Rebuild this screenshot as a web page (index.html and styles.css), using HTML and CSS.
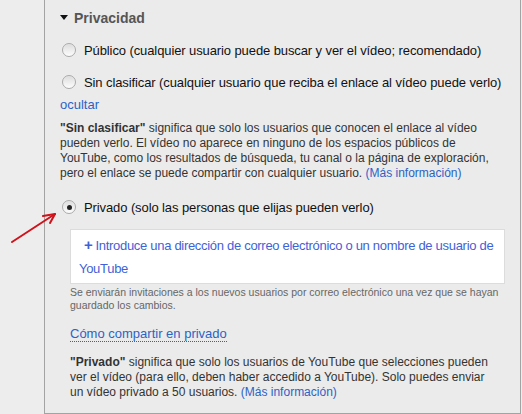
FILE: index.html
```html
<!DOCTYPE html>
<html>
    <head>
        <title>Privacidad</title>
        <meta charset="utf-8">
        <link rel="stylesheet" href="styles.css">
    </head>
    <body>
        <div class="panel">
            <h3 class="sec_title"><span class="caret"></span>Privacidad</h3>

            <label class="opt"><span class="radio"></span>Público (cualquier usuario puede buscar y ver el vídeo; recomendado)</label>
            <label class="opt"><span class="radio"></span>Sin clasificar (cualquier usuario que reciba el enlace al vídeo puede verlo)</label>
            <a class="toggle" href="#">ocultar</a>

            <p class="note"><b>"Sin clasificar"</b> significa que solo los usuarios que conocen el enlace al vídeo pueden verlo. El vídeo no aparece en ninguno de los espacios públicos de YouTube, como los resultados de búsqueda, tu canal o la página de exploración, pero el enlace se puede compartir con cualquier usuario. <a href="#">(Más información)</a></p>

            <label class="opt opt_priv"><span class="radio on"></span>Privado (solo las personas que elijas pueden verlo)</label>

            <div class="share">
                <div class="invite_box">
                    <a href="#"><span class="plus">+</span>Introduce una dirección de correo electrónico o un nombre de usuario de YouTube</a>
                </div>
                <p class="small">Se enviarán invitaciones a los nuevos usuarios por correo electrónico una vez que se hayan guardado los cambios.</p>
                <a class="howto" href="#">Cómo compartir en privado</a>
                <p class="note note_priv"><b>"Privado"</b> significa que solo los usuarios de YouTube que selecciones pueden ver el vídeo (para ello, deben haber accedido a YouTube). Solo puedes enviar un vídeo privado a 50 usuarios. <a href="#">(Más información)</a></p>
            </div>
        </div>

        <!-- red pointer drawn over the panel edge -->
        <svg class="pointer" width="70" height="40" viewBox="0 0 70 40">
            <line x1="12" y1="32" x2="55" y2="4" stroke="#d0121b" stroke-width="2" stroke-linecap="round"/>
            <polyline points="43,6 55,4 50,13" fill="none" stroke="#d0121b" stroke-width="2" stroke-linecap="round" stroke-linejoin="round"/>
        </svg>
    </body>
</html>
```

FILE: styles.css
```css
body {
    margin: 0;
    background-color: #ededed;
    font-family: "Liberation Sans", Arial, sans-serif;
    font-size: 13px;
    color: #333;
}
a {
    color: #2b63c6;
    text-decoration: none;
}
.panel {
    margin-left: 44px;
    width: 445px;
    padding: 10px 15px 13px 15px;
    background-color: #ebebeb;
    border: 1px solid #a3a3a3;
    border-top: none;
}
.sec_title {
    margin: 0;
    font-size: 14px;
    line-height: 17px;
    color: #555;
    display: flex;
    align-items: center;
}
.caret {
    width: 0;
    height: 0;
    border-left: 4.5px solid transparent;
    border-right: 4.5px solid transparent;
    border-top: 5px solid #111;
    margin: 0 6px 2px 0;
}
.opt {
    display: flex;
    align-items: center;
    margin-top: 14px;
    height: 18px;
    color: #111;
    white-space: nowrap;
    letter-spacing: -0.1px;
}
.radio {
    width: 12px;
    height: 12px;
    border: 1px solid #a9a9a9;
    border-radius: 50%;
    background: linear-gradient(#dcdcdc, #fdfdfd);
    margin: 0 8px 0 2px;
    display: flex;
    align-items: center;
    justify-content: center;
    box-shadow: inset 0 0 1px #fff;
}
.radio.on::after {
    content: "";
    width: 5px;
    height: 5px;
    border-radius: 50%;
    background-color: #222;
}
.toggle {
    display: block;
    margin-top: 6px;
    line-height: 16px;
    width: max-content;
}
.note {
    margin: 8px 0 0 0;
    font-size: 12px;
    line-height: 15px;
}
.note b {
    color: #333;
}
.opt_priv {
    margin-top: 17px;
}
.share {
    margin-left: 10px;
}
.invite_box {
    margin-top: 13px;
    background-color: #fff;
    border: 1px solid #dcdcdc;
    padding: 3px 2px 3px 8px;
    line-height: 23px;
    text-indent: 5px;
    letter-spacing: -0.3px;
}
.invite_box a {
    color: #3f62d8;
}
.plus {
    font-weight: bold;
    font-size: 15px;
    margin-right: 3px;
}
.small {
    margin: 2px 0 0 0;
    font-size: 10.5px;
    line-height: 13px;
    color: #666;
}
.howto {
    display: inline-block;
    margin-top: 14px;
    line-height: 15px;
    border-bottom: 1px dotted #2b63c6;
}
.note_priv {
    margin-top: 13px;
    margin-right: 8px;
}
.pointer {
    position: absolute;
    left: 0;
    top: 210px;
}
```
